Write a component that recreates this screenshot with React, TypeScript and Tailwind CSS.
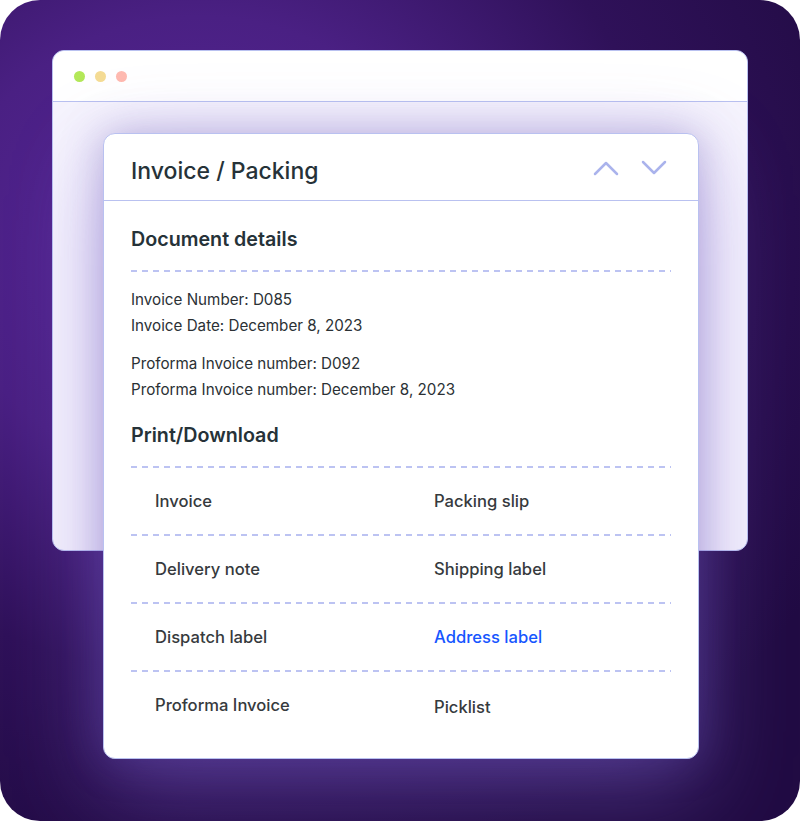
const docLines = [
  ["Invoice Number: D085", "Invoice Date: December 8, 2023"],
  ["Proforma Invoice number: D092", "Proforma Invoice number: December 8, 2023"],
];

const rows = [
  ["Invoice", "Packing slip"],
  ["Delivery note", "Shipping label"],
  ["Dispatch label", "Address label"],
  ["Proforma Invoice", "Picklist"],
];

const Dashed = () => (
  <div className="h-[2px] w-full bg-[repeating-linear-gradient(to_right,#bcc3f2_0_6px,transparent_6px_11px)]" />
);

export default function App() {
  return (
    <div className="w-[800px] h-[821px] bg-white font-['Inter',sans-serif]">
      <div className="w-full h-full rounded-[40px] overflow-hidden pt-[50px] px-[52px] bg-[radial-gradient(ellipse_90%_80%_at_25%_30%,#57269a_0%,#4a2083_35%,#2f1159_65%,#210b43_100%)]">
        {/* browser window */}
        <div className="relative h-[501px] rounded-[12px] border-[1.5px] border-[#b9c1f0] bg-[#f6f4fd]">
          <div className="h-[51px] flex items-center gap-[10px] pl-[21px] bg-white rounded-t-[12px] border-b-[1.5px] border-[#b9c1f0]">
            <span className="w-[11px] h-[11px] rounded-full bg-[#b3e858]" />
            <span className="w-[11px] h-[11px] rounded-full bg-[#f5dc94]" />
            <span className="w-[11px] h-[11px] rounded-full bg-[#ffbab0]" />
          </div>

          {/* card */}
          <div className="absolute left-[50px] top-[82px] w-[596px] h-[626px] rounded-[12px] border-[1.5px] border-[#b9c1f0] bg-white shadow-[0_0_40px_rgba(90,70,170,0.35),0_30px_90px_rgba(140,110,220,0.45)]">
            <div className="h-[67px] flex items-center justify-between pl-[27px] pr-[30px] border-b-[1.5px] border-[#b9c1f0]">
              <h1 className="pt-[8px] text-[23px] font-medium text-[#263238]">Invoice / Packing</h1>
              <div className="flex items-center gap-[20px] pt-[2px]">
                <svg width="28" height="18" viewBox="0 0 28 18" fill="none" stroke="#aab3ec" strokeWidth="2.5" strokeLinecap="round" strokeLinejoin="round">
                  <path d="M3 15 L14 4 L25 15" />
                </svg>
                <svg width="28" height="18" viewBox="0 0 28 18" fill="none" stroke="#aab3ec" strokeWidth="2.5" strokeLinecap="round" strokeLinejoin="round">
                  <path d="M3 3 L14 14 L25 3" />
                </svg>
              </div>
            </div>

            <div className="px-[27px]">
              <h2 className="mt-[26px] text-[19.7px] leading-[24px] font-semibold text-[#263238]">Document details</h2>
              <div className="mt-[19px]">
                <Dashed />
              </div>

              <div className="mt-[17px] flex flex-col gap-[16px]">
                {docLines.map((group, i) => (
                  <div key={i} className="flex flex-col gap-[4px]">
                    {group.map((line) => (
                      <p key={line} className="text-[15.2px] leading-[22px] text-[#2b3135]">{line}</p>
                    ))}
                  </div>
                ))}
              </div>

              <h2 className="mt-[22px] text-[19.7px] leading-[24px] font-semibold text-[#263238]">Print/Download</h2>
              <div className="mt-[19px]">
                <Dashed />
              </div>

              {rows.map(([a, b], i) => (
                <div key={a}>
                  <div className="h-[66px] grid grid-cols-[279px_1fr] items-center pl-6 pt-[1px] text-[16.6px] font-medium text-[#363a3d]">
                    <span>{a}</span>
                    <span className={b === "Address label" ? "text-[#1656ff]" : i === 3 ? "pt-[3px]" : ""}>{b}</span>
                  </div>
                  {i < rows.length - 1 && <Dashed />}
                </div>
              ))}
            </div>
          </div>
        </div>
      </div>
    </div>
  );
}
